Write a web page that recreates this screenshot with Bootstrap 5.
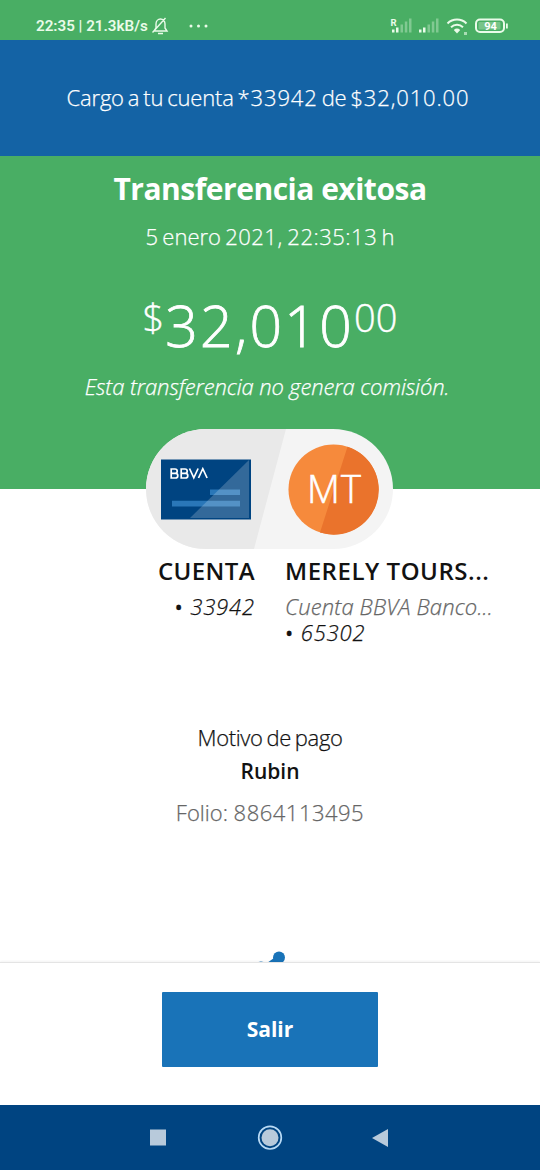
<!DOCTYPE html>
<html lang="es">
<head>
<meta charset="utf-8">
<meta name="viewport" content="width=device-width, initial-scale=1">
<title>Transferencia exitosa</title>
<link href="https://cdn.jsdelivr.net/npm/bootstrap@5.3.0/dist/css/bootstrap.min.css" rel="stylesheet">
<style>
body{font-family:"Open Sans","Noto Sans",sans-serif;font-weight:300;font-size:22px;line-height:30px;color:#121212;background:#fff;-webkit-text-stroke:.25px}
.screen{width:540px;height:1170px}
.green{background:#49ae64}
.status{height:40px;padding:11px 32px 0 36px;font-family:Roboto,sans-serif;font-weight:600;font-size:15.200px;color:#eafbe9;-webkit-text-stroke:0}
.notice{height:116px;background:#1463a5;padding-bottom:2px;padding-right:4px}
.tight{letter-spacing:-.2px;word-spacing:-1.500px}
.num{letter-spacing:.5px}
.wide-num{letter-spacing:.85px}
.hero{height:333px;padding-top:15px}
.title{font-size:30px;line-height:36px;font-weight:700;letter-spacing:-.5px;-webkit-text-stroke:0}
.when{margin-top:14px;word-spacing:-1.500px}
.amount{height:70px;margin-top:39px;font-size:57px;line-height:70px;-webkit-text-stroke:.8px}
.amount span{letter-spacing:2.300px;margin-left:1px}
.amount small{font-size:38px;line-height:70px;position:relative;top:-8px;-webkit-text-stroke:.4px}
.fee{margin-top:11px;padding-right:6px;letter-spacing:-.12px}
.pair{width:247px;height:120px;margin:-60px auto 0;border-radius:60px;position:relative;left:-.5px}
.names{line-height:26px;margin-top:7px}
.names .from{width:255px}
.names .to{width:255px;padding-left:30px}
.party{font-size:24px;line-height:30px;font-weight:600;margin-bottom:7px;letter-spacing:.4px;-webkit-text-stroke:0}
.to .party{letter-spacing:.55px}
.dot{font-weight:400;font-style:normal}
.soft{color:#666}
.bank{letter-spacing:.15px}
.reason{margin-top:77px}
.why{letter-spacing:-.35px;word-spacing:-1.500px}
.what{font-size:21px;line-height:28px;margin-top:5px;font-weight:600;-webkit-text-stroke:0}
.folio{margin-top:12px}
.share{height:12px}
.foot{height:143px;padding-top:29px;border-top:1px solid #e4e4e4;box-shadow:0 -1px 2px #0000000d}
.exit{width:216px;height:75px;background:#1973b8;border-radius:1px;font-size:21px;font-weight:700;color:#fff;border:0;-webkit-text-stroke:0}
.keys{height:65px;background:#004481}
</style>
</head>
<body>
<main class="screen d-flex flex-column overflow-hidden">
  <header class="status green d-flex align-items-center flex-shrink-0">
    <span>22:35 | 21.3kB/s</span>
    <svg class="ms-1" width="18" height="20" viewBox="1 0 18 20" fill="none" stroke="#eafbe9" stroke-width="1.4"><path d="M3 15h13l-2-3V8c0-3-2-5-4.500-5S5 5 5 8v4zM1.500 16.500L14.500 2M7 17.500h5"/></svg>
    <svg class="ms-3" width="26" height="6" viewBox="-3 0 26 6" fill="#eafbe9"><circle cx="2" cy="3" r="1.500"/><circle cx="9.500" cy="3" r="1.500"/><circle cx="17" cy="3" r="1.500"/></svg>
    <svg class="ms-auto" width="118" height="24" viewBox="390 13.500 118 24"><g fill="#eafbe9"><text x="390.500" y="25" font-size="9.500" font-weight="700">R</text><path d="M392 29h2.500v3H392zM396 27h2.500v5H396zM419 29h2.500v3H419zM423 27h2.500v5H423z"/><path opacity=".35" d="M400.500 24h2.500v8h-2.500zM404.800 21h2.500v11h-2.500zM409 18h2.500v14H409zM427.500 24h2.500v8h-2.500zM431.800 21h2.500v11h-2.500zM436 18h2.500v14H436z"/><path d="M457 33l-3.200-3.600a4.700 4.700 0 0 1 6.400 0z"/><path opacity=".6" d="M464 31.500h3v3h-3z"/></g><g fill="none" stroke="#eafbe9" stroke-width="2"><path d="M447.500 23a13.500 13.500 0 0 1 19 0M451 26.700a8.800 8.800 0 0 1 12 0"/><rect x="476" y="19" width="28" height="12.500" rx="4"/></g><path fill="#eafbe9" d="M506 23h1.800v5H506z"/><rect x="478.500" y="21.500" width="22" height="7.500" rx="1" fill="#78c489"/><text x="490.500" y="29.300" text-anchor="middle" font-size="11" font-weight="700" fill="#fff">94</text></svg>
  </header>
  <section class="notice d-flex align-items-center justify-content-center text-white flex-shrink-0"><span class="tight">Cargo a tu cuenta <span class="wide-num">*33942</span> de <span class="wide-num">$32,010.00</span></span></section>
  <section class="hero green text-white text-center flex-shrink-0">
    <h1 class="title mb-0">Transferencia exitosa</h1>
    <div class="when">5 enero <span class="num">2021, 22:35:13</span> h</div>
    <div class="amount d-flex justify-content-center"><small>$</small><span>32,010</span><small>00</small></div>
    <div class="fee fst-italic">Esta transferencia no genera comisión.</div>
  </section>
  <section class="pair overflow-hidden flex-shrink-0">
    <svg class="d-block" width="247" height="120" viewBox="146 429 247 120">
      <path fill="#f4f4f4" d="M146 429h247v120H146z"/><path fill="#e9e9e9" d="M146 429h140l-32 120H146z"/>
      <path fill="#004481" d="M161 459.500h90V519.500h-90z"/><path fill="#2a77b8" d="M210 489.500h30v5.500h-30zM172 500.800h68v5.700h-68z"/><path fill="#fff" opacity=".2" d="M190 518l59-58v58z"/>
      <g fill="none" stroke="#fff" stroke-width="1.700"><path d="M171.200 469v9h4.300a2.300 2.300 0 0 0 0-4.600h-4.300 3.800a2.200 2.200 0 0 0 0-4.400zM181.200 469v9h4.300a2.300 2.300 0 0 0 0-4.600h-4.300 3.800a2.200 2.200 0 0 0 0-4.400zM189.500 468.500l4.300 9.300 4.300-9.300M198.500 478l4.300-9.300 4.300 9.300"/></g>
      <circle cx="333.500" cy="489.500" r="45" fill="#f68a3c"/><path fill="#ea732c" d="M347.500 446.700A45 45 0 0 1 320 532.500z"/>
      <text x="334" y="502.500" text-anchor="middle" font-size="38" fill="#fff" stroke="#fff" stroke-width=".6" textLength="54">MT</text>
    </svg>
  </section>
  <section class="names d-flex flex-shrink-0">
    <div class="from text-end"><div class="party">CUENTA</div><div class="fst-italic wide-num"><span class="dot">•</span> 33942</div></div>
    <div class="to text-nowrap"><div class="party">MERELY TOURS...</div><div class="fst-italic soft bank">Cuenta BBVA Banco...</div><div class="fst-italic wide-num"><span class="dot">•</span> 65302</div></div>
  </section>
  <section class="reason text-center flex-shrink-0">
    <div class="why">Motivo de pago</div>
    <div class="what">Rubin</div>
    <div class="folio soft">Folio: <span class="num">8864113495</span></div>
  </section>
  <div class="share mt-auto text-center flex-shrink-0 overflow-hidden"><svg class="d-block mx-auto" width="40" height="12" viewBox="250 950 40 12" fill="#1973b8"><circle cx="279" cy="957.500" r="6"/><path d="M267 963l7-5 3 6z"/><circle cx="261" cy="968" r="6.500"/></svg></div>
  <footer class="foot bg-white text-center flex-shrink-0"><button class="exit btn p-0" type="button">Salir</button></footer>
  <nav class="keys flex-shrink-0"><svg class="d-block" width="540" height="65" viewBox="0 1105 540 65" fill="#b8cadb"><path d="M150 1129.500h16v16h-16zM388 1129v18l-16-9z"/><circle cx="270" cy="1137.700" r="8.500"/><circle cx="270" cy="1137.700" r="11.300" fill="none" stroke="#b8daf5" stroke-width="1.700"/></svg></nav>
</main>
<script src="https://cdn.jsdelivr.net/npm/bootstrap@5.3.0/dist/js/bootstrap.bundle.min.js"></script>
</body>
</html>
